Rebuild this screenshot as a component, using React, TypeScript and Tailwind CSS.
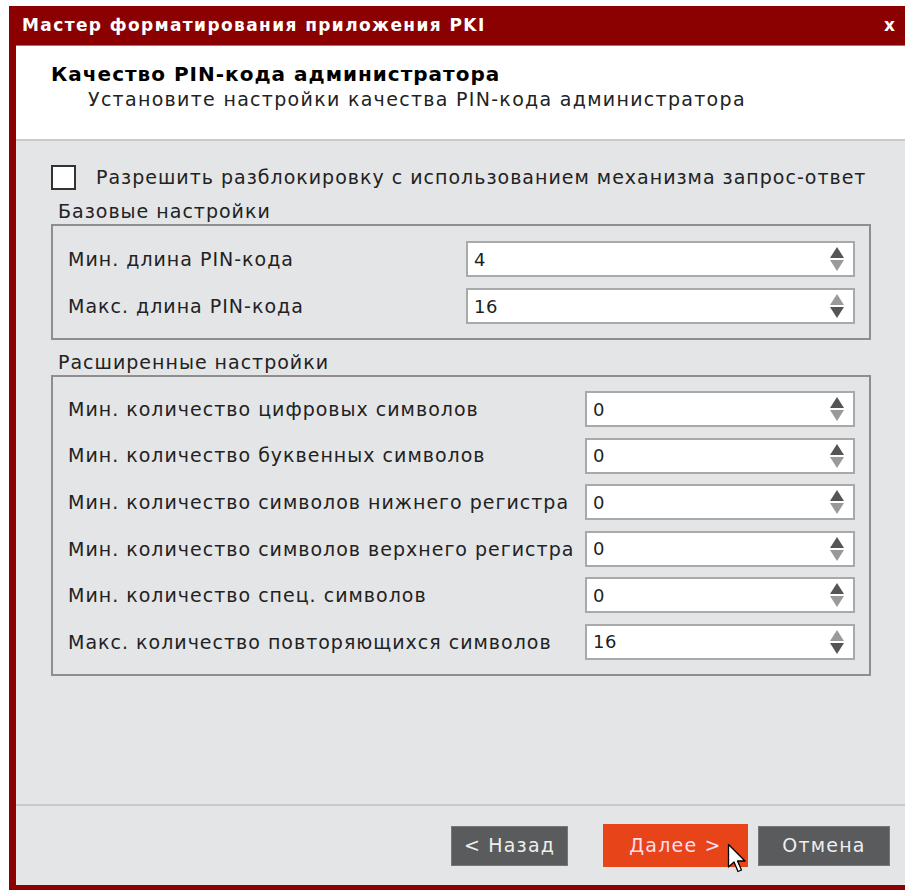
import React, { useState } from 'react';

const body = { fontFamily: '"DejaVu Sans", "Noto Sans", sans-serif' };

type SpinProps = { value: number; min: number; max: number };

// Two stacked triangles; the one that can still move is drawn darker
const SpinArrows: React.FC<{ atMin: boolean; atMax: boolean }> = ({ atMin, atMax }) => (
  <svg width="16" height="26" viewBox="0 0 16 26" className="shrink-0">
    <polygon points="8,1 15,12 1,12" fill={atMax ? '#9a9a9a' : '#555555'} />
    <polygon points="1,14 15,14 8,25" fill={atMin ? '#9a9a9a' : '#555555'} />
  </svg>
);

const SpinBox: React.FC<SpinProps> = ({ value, min, max }) => (
  <div className="flex items-center h-[36px] bg-white border-2 border-[#a9a9a9] pl-[6px] pr-[8px]">
    <span className="flex-1 text-[18px] tracking-[0.5px] text-[#1f1f1f]">{value}</span>
    <SpinArrows atMin={value <= min} atMax={value >= max} />
  </div>
);

const basic = [
  { label: 'Мин. длина PIN-кода', value: 4, min: 4, max: 16 },
  { label: 'Макс. длина PIN-кода', value: 16, min: 4, max: 16 },
];

const advanced = [
  { label: 'Мин. количество цифровых символов', value: 0, min: 0, max: 16 },
  { label: 'Мин. количество буквенных символов', value: 0, min: 0, max: 16 },
  { label: 'Мин. количество символов нижнего регистра', value: 0, min: 0, max: 16 },
  { label: 'Мин. количество символов верхнего регистра', value: 0, min: 0, max: 16 },
  { label: 'Мин. количество спец. символов', value: 0, min: 0, max: 16 },
  { label: 'Макс. количество повторяющихся символов', value: 16, min: 0, max: 16 },
];

const Cursor: React.FC = () => (
  <svg width="22" height="32" viewBox="0 0 22 32" className="absolute left-[727px] top-[843px]">
    <path
      d="M1.5 1.5 L1.5 24 L7 19 L11 28.5 L14.5 27 L10.5 18 L18 18 Z"
      fill="#ffffff"
      stroke="#000000"
      strokeWidth="1.3"
      strokeLinejoin="round"
    />
  </svg>
);

export default function App() {
  const [unlock, setUnlock] = useState(false);

  return (
    <div className="relative w-[905px] h-[890px] overflow-hidden bg-white pl-[9px] pt-[6px]" style={body}>
      <div className="w-[940px] h-[884px] bg-[#8b0000] flex flex-col px-[7px] pb-[5px]">
        {/* title bar */}
        <div className="h-[40px] shrink-0 flex items-center justify-between pl-[6px] pr-[47px] border-b border-[#c26a6a]">
          <span className="text-white font-bold text-[17px] tracking-[1.4px]">Мастер форматирования приложения PKI</span>
          <span className="text-white font-bold text-[17px]">x</span>
        </div>

        {/* page header */}
        <div className="h-[95px] shrink-0 bg-white pl-[35px] pt-[16px] border-b-2 border-[#c9c9c9]">
          <div className="font-bold text-[20px] leading-[25px] tracking-[1px] text-black">
            Качество PIN-кода администратора
          </div>
          <div className="pl-[37px] text-[19px] leading-[25px] tracking-[1.3px] text-[#222]">
            Установите настройки качества PIN-кода администратора
          </div>
        </div>

        {/* page body */}
        <div className="flex-1 bg-[#e4e5e7] pl-[35px] pt-[23px] border-b-2 border-[#c9c9c9] text-[#222] text-[19px] tracking-[1px]">
          <label className="flex items-center h-[26px] cursor-pointer">
            <button
              type="button"
              onClick={() => setUnlock((v) => !v)}
              className="w-[25px] h-[25px] border-2 border-[#333] bg-white flex items-center justify-center"
            >
              {unlock && <span className="text-[16px] leading-none">✓</span>}
            </button>
            <span className="ml-[20px]">Разрешить разблокировку с использованием механизма запрос-ответ</span>
          </label>

          <div className="mt-[10px] pl-[7px] leading-[22px]">Базовые настройки</div>
          <div className="mt-[2px] w-[820px] border-2 border-[#8e8e8e] pt-[15px] pb-[14px] pl-[15px] pr-[14px] flex flex-col gap-[11px]">
            {basic.map((r) => (
              <div key={r.label} className="grid grid-cols-[1fr_389px] items-center">
                <span>{r.label}</span>
                <SpinBox value={r.value} min={r.min} max={r.max} />
              </div>
            ))}
          </div>

          <div className="mt-[11px] pl-[7px] leading-[22px]">Расширенные настройки</div>
          <div className="mt-[2px] w-[820px] border-2 border-[#8e8e8e] pt-[14px] pb-[14px] pl-[15px] pr-[14px] flex flex-col gap-[10.6px]">
            {advanced.map((r) => (
              <div key={r.label} className="grid grid-cols-[1fr_270px] items-center">
                <span className="whitespace-nowrap">{r.label}</span>
                <SpinBox value={r.value} min={r.min} max={r.max} />
              </div>
            ))}
          </div>
        </div>

        {/* navigation buttons */}
        <div className="h-[79px] shrink-0 bg-[#e4e5e7] flex items-center pl-[435px] gap-[10px] text-[19px] tracking-[1.2px]">
          <button className="w-[117px] h-[40px] bg-[#5a5b5c] border border-[#777] text-[#eee]">&lt; Назад</button>
          <button className="ml-[25px] w-[145px] h-[43px] bg-[#e8441a] text-[#fde]">Далее &gt;</button>
          <button className="w-[132px] h-[40px] bg-[#5a5b5c] border border-[#777] text-[#eee]">Отмена</button>
        </div>
      </div>
      <Cursor />
    </div>
  );
}
